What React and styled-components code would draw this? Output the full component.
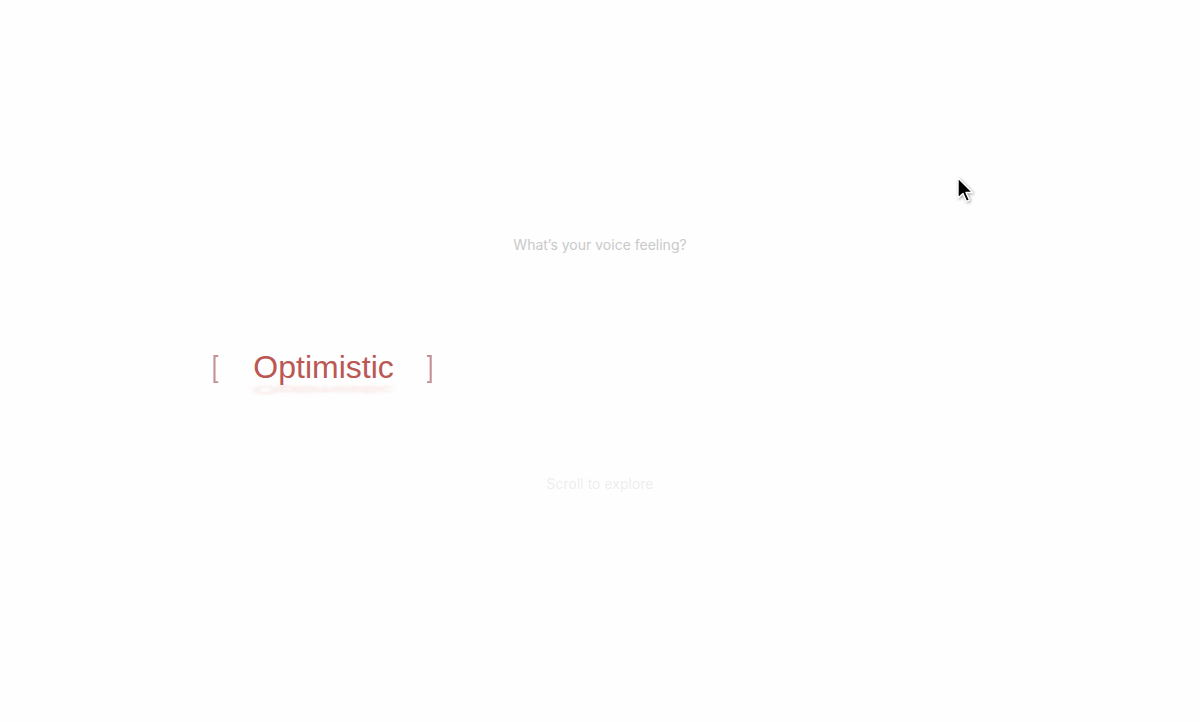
import React from 'react';
import styled, { createGlobalStyle } from 'styled-components';

const GlobalStyle = createGlobalStyle`
  html, body {
    margin: 0;
    padding: 0;
    background: #fefefe;
  }

  body {
    font-family: Inter, 'Liberation Sans', Arial, sans-serif;
    -webkit-font-smoothing: antialiased;
  }
`;

const Page = styled.main`
  position: relative;
  width: 1200px;
  height: 722px;
  overflow: hidden;
  display: flex;
  flex-direction: column;
  align-items: center;
  padding-top: 236px;
  box-sizing: border-box;
`;

const Prompt = styled.p`
  margin: 0;
  font-size: 14px;
  line-height: 17px;
  color: #c9c9c9;
`;

const WordRow = styled.div`
  align-self: stretch;
  display: flex;
  align-items: center;
  margin-top: 96px;
  padding-left: 211px;
  font-family: 'Liberation Sans', Arial, sans-serif;
`;

const Bracket = styled.span`
  font-size: 30px;
  font-weight: 300;
  line-height: 36px;
  color: #c48f95;
  transform: scaleX(0.8);
`;

const Word = styled.span`
  position: relative;
  margin: 0 32px 0 34px;
  font-size: 32px;
  line-height: 36px;
  color: #ba5853;

  &::after {
    content: attr(data-text);
    position: absolute;
    left: 0;
    top: 23px;
    transform: scaleY(-0.35);
    color: rgba(220, 130, 120, 0.28);
    filter: blur(3px);
    pointer-events: none;
  }
`;

const Hint = styled.p`
  margin: 90px 0 0;
  font-size: 14px;
  line-height: 17px;
  color: #ededed;
  filter: blur(0.6px);
`;

const Cursor = styled.svg`
  position: absolute;
  left: 955px;
  top: 176px;
  width: 20px;
  height: 30px;
  filter: drop-shadow(1px 1px 1.5px rgba(0, 0, 0, 0.35));
`;

export default function App() {
  return (
    <>
      <GlobalStyle />
      <Page>
        <Prompt>What’s your voice feeling?</Prompt>
        <WordRow>
          <Bracket>[</Bracket>
          <Word data-text="Optimistic">Optimistic</Word>
          <Bracket>]</Bracket>
        </WordRow>
        <Hint>Scroll to explore</Hint>
        <Cursor viewBox="0 0 20 30">
          <path
            d="M3 2 L3 22 L8 17.5 L11.5 25.5 L14.5 24.2 L11 16.5 L17.5 16.5 Z"
            fill="#000"
            stroke="#fff"
            strokeWidth="1.4"
            strokeLinejoin="round"
          />
        </Cursor>
      </Page>
    </>
  );
}
